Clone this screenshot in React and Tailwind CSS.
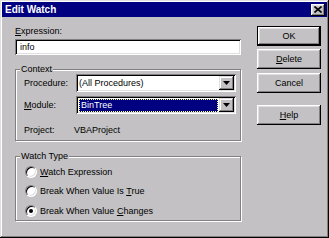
import React from 'react';

function Btn({ children, isDefault, className = '' }) {
  const face = (
    <div className="h-full w-full flex items-center justify-center shadow-[inset_-1px_-1px_0_#000,inset_1px_1px_0_#fff,inset_-2px_-2px_0_#808080,inset_2px_2px_0_#dfdfdf]">
      {children}
    </div>
  );
  return (
    <div className={`w-[64px] h-[20px] ${isDefault ? 'border border-black' : ''} ${className}`}>
      {face}
    </div>
  );
}

function Arrow() {
  return (
    <svg width="7" height="4" viewBox="0 0 7 4">
      <polygon points="0,0 7,0 3.5,4" fill="#000" />
    </svg>
  );
}

function Combo({ value, focused }) {
  return (
    <div className="w-[160px] h-[18px] bg-white flex items-stretch p-[2px] shadow-[inset_1px_1px_0_#808080,inset_-1px_-1px_0_#fff,inset_2px_2px_0_#000,inset_-2px_-2px_0_#dfdfdf]">
      <div className="flex-1 flex items-center pl-[1px] pr-[1px]">
        {focused ? (
          <div className="w-full h-[13px] bg-[#000080] border border-dotted border-[#ffff7f] text-white leading-[11px] pl-[1px]">
            {value}
          </div>
        ) : (
          <span className="text-black">{value}</span>
        )}
      </div>
      <div className="w-[15px] bg-[#c3c1c3] flex items-center justify-center shadow-[inset_-1px_-1px_0_#000,inset_1px_1px_0_#dfdfdf,inset_-2px_-2px_0_#808080,inset_2px_2px_0_#fff]">
        <Arrow />
      </div>
    </div>
  );
}

function Radio({ checked, children }) {
  return (
    <div className="flex items-center h-[14px]">
      <div className="w-[12px] h-[12px] rounded-full bg-white flex items-center justify-center border border-t-[#808080] border-l-[#808080] border-b-white border-r-white shadow-[inset_1px_1px_0_#000,inset_-1px_-1px_0_#dfdfdf]">
        {checked && <div className="w-[4px] h-[4px] rounded-full bg-black" />}
      </div>
      <span className="ml-[3px]">{children}</span>
    </div>
  );
}

function Group({ title, className = '', children }) {
  return (
    <div className={`relative border border-[#808080] shadow-[1px_1px_0_#fff,inset_1px_1px_0_#fff] ${className}`}>
      <span className="absolute -top-[7px] left-[4px] px-[1px] bg-[#c3c1c3] leading-[12px]">{title}</span>
      {children}
    </div>
  );
}

export default function App() {
  return (
    <div className="w-[329px] h-[238px] bg-[#c3c1c3] p-[2px] font-['Liberation_Sans',Arial,sans-serif] text-[9px] leading-[12px] text-black shadow-[inset_-1px_-1px_0_#000,inset_1px_1px_0_#dfdfdf,inset_-2px_-2px_0_#808080,inset_2px_2px_0_#fff] overflow-hidden">
      <div className="h-[15px] bg-[#000080] flex items-center justify-between pl-[3px] pr-[2px]">
        <span className="text-white font-bold text-[10px]">Edit Watch</span>
        <div className="w-[14px] h-[12px] flex items-center justify-center shadow-[inset_-1px_-1px_0_#000,inset_1px_1px_0_#fff,inset_-2px_-2px_0_#808080,inset_2px_2px_0_#dfdfdf] bg-[#c3c1c3]">
          <svg width="8" height="7" viewBox="0 0 8 7">
            <path d="M0.5 0.5 L7.5 6.5 M7.5 0.5 L0.5 6.5" stroke="#000" strokeWidth="1.6" />
          </svg>
        </div>
      </div>

      <div className="flex pl-[13px]">
        <div className="w-[226px] flex flex-col">
          <div className="mt-[8px]">
            <u>E</u>xpression:
          </div>
          <div className="mt-[2px] h-[16px] bg-white flex items-center pl-[5px] shadow-[inset_1px_1px_0_#808080,inset_-1px_-1px_0_#fff,inset_2px_2px_0_#000,inset_-2px_-2px_0_#dfdfdf]">
            info
          </div>

          <Group title="Context" className="mt-[14px] h-[72px] pl-[8px] pt-[4px]">
            <div className="flex items-center">
              <span className="w-[52px]">Procedure:</span>
              <Combo value="(All Procedures)" />
            </div>
            <div className="flex items-center mt-[4px]">
              <span className="w-[52px]">
                <u>M</u>odule:
              </span>
              <Combo value="BinTree" focused />
            </div>
            <div className="flex items-center mt-[10px]">
              <span className="w-[50px]">Project:</span>
              <span>VBAProject</span>
            </div>
          </Group>

          <Group title="Watch Type" className="mt-[15px] h-[65px] pl-[9px] pt-[8px]">
            <Radio>
              <u>W</u>atch Expression
            </Radio>
            <div className="mt-[5px]">
              <Radio>
                Break When Value Is <u>T</u>rue
              </Radio>
            </div>
            <div className="mt-[6px]">
              <Radio checked>
                Break When Value <u>C</u>hanges
              </Radio>
            </div>
          </Group>
        </div>

        <div className="ml-[16px] w-[64px] flex flex-col pt-[9px]">
          <Btn isDefault>OK</Btn>
          <Btn className="mt-[3px]">
            <span>
              <u>D</u>elete
            </span>
          </Btn>
          <Btn className="mt-[4px]">Cancel</Btn>
          <Btn className="mt-[12px]">
            <span>
              <u>H</u>elp
            </span>
          </Btn>
        </div>
      </div>
    </div>
  );
}
